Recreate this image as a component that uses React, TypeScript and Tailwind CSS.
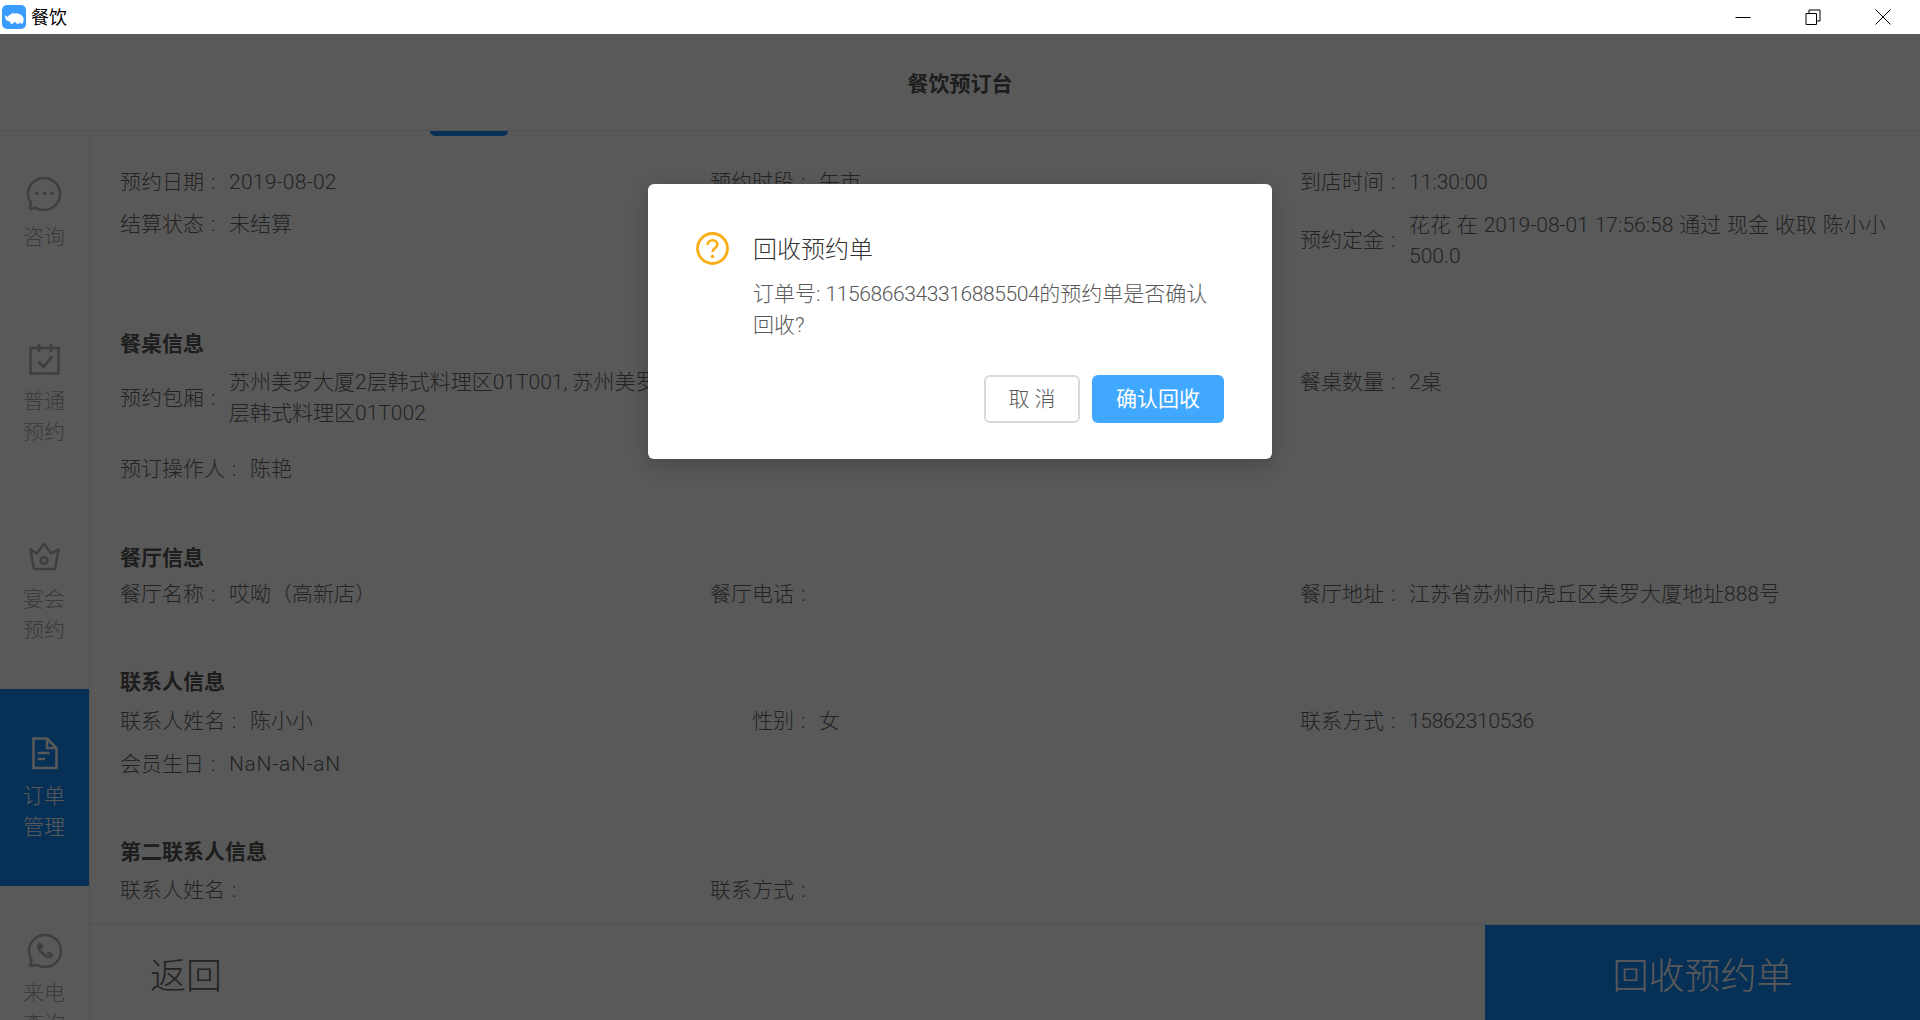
import React from "react";

const C = "#b4b4b4";

const Chat = () => (
  <svg viewBox="6 7 36 36" className="w-[36px] h-[36px]" fill="none" stroke={C} strokeWidth="2.6" strokeLinejoin="round">
    <path d="M24 9A16 16 0 1 1 24 41C21 41 18 40.3 15.5 39L10 40L10.8 33.5C9 31 8 28 8 25A16 16 0 0 1 24 9Z" />
    <circle cx="17" cy="24.500" r="1.8" fill={C} stroke="none" />
    <circle cx="24.500" cy="24.500" r="1.8" fill={C} stroke="none" />
    <circle cx="32" cy="24.500" r="1.8" fill={C} stroke="none" />
  </svg>
);
const Calendar = () => (
  <svg viewBox="6 7 36 36" className="w-[36px] h-[36px]" fill="none" stroke={C} strokeWidth="2.6">
    <path d="M10.500 14H38.500V39.500H10.500Z" />
    <path d="M19 10V18M31 10V18" />
    <path d="M18.500 27.500L23.500 33L32 22.500" strokeWidth="3" />
  </svg>
);
const Crown = () => (
  <svg viewBox="6 7 36 36" className="w-[36px] h-[36px]" fill="none" stroke={C} strokeWidth="2.6" strokeLinejoin="round">
    <path d="M10.500 15.500L17 19.500L24 9.500L31 19.500L38.500 15.500L35 35H14Z" />
    <circle cx="24" cy="26.500" r="3.400" />
  </svg>
);
const Doc = () => (
  <svg viewBox="6 7 36 36" className="w-[36px] h-[36px]" fill="none" stroke="#ffffff" strokeWidth="2.6">
    <path d="M13.500 9.500H27L36.500 19V39H13.500Z" />
    <path d="M27 9.500V19H36.500" />
    <path d="M17.500 24H29.500M17.500 30H25" />
  </svg>
);
const Phone = () => (
  <svg viewBox="6 7 36 36" className="w-[36px] h-[36px]" fill="none" stroke={C} strokeWidth="2.6" strokeLinejoin="round">
    <path d="M25 9A16 16 0 1 1 25 41C22 41 19 40.200 16.500 38.800L10.500 40L11.500 33.800C9.800 31.300 9 28.300 9 25A16 16 0 0 1 25 9Z" />
    <path d="M19.500 18C18.300 19.200 18.200 21 19.200 23.200C20.800 26.500 23.300 28.800 26.500 30.200C28.700 31.100 30.500 30.800 31.800 29.300" strokeWidth="2.8" strokeLinecap="round" />
    <path d="M19 17.500L21.500 17.500L22.800 21L21 23M31.800 29.500L32 27.500L28.500 26L26.500 27.800" fill={C} strokeWidth="1" />
  </svg>
);

const Logo = () => (
  <div className="w-[24px] h-[24px] rounded-[5px] bg-[#3a9cff] flex items-center justify-center">
    <svg viewBox="0 0 24 24" className="w-[24px] h-[24px]" fill="#ffffff">
      <path d="M2.500 10L5.500 12C6.500 10.500 8 9.300 9.500 9L10.500 7.500L11.300 8.800C13 8 16 8.200 18 9.300C20 10.300 21.500 12 21.700 14.500L21 18L19 19L17.800 17L16.800 19L14.500 18.500L13.500 17L11.500 17.500L10.800 19L8.500 18.500L8.200 16.500C6 16.500 4 15.200 3.500 13.500Z" />
    </svg>
  </div>
);

function Item({ label, value, full, className = "" }: { label: string; value?: React.ReactNode; full?: boolean; className?: string }) {
  return (
    <div className={`flex items-center ${className}`}>
      <span className={`whitespace-nowrap shrink-0 text-right ${full ? "min-w-[84px]" : ""}`}>{label}</span>
      <span className="w-[25px] shrink-0 pl-[7px]">:</span>
      {value ? <span className="flex-1 min-w-0">{value}</span> : null}
    </div>
  );
}

const Section = ({ children, className }: { children: React.ReactNode; className: string }) => (
  <div className={`font-bold text-[#555555] ${className}`}>{children}</div>
);

const Row = ({ children, className = "" }: { children: React.ReactNode; className?: string }) => (
  <div className={`grid grid-cols-[590px_590px_590px] ${className}`}>{children}</div>
);

const navItems = [
  { icon: <Chat />, lines: ["咨询"], box: "h-[166px] pt-[45px]", gap: "mt-[10px]" },
  { icon: <Calendar />, lines: ["普通", "预约"], box: "h-[197px] pt-[44px]", gap: "mt-[9px]" },
  { icon: <Crown />, lines: ["宴会", "预约"], box: "h-[195px] pt-[47px]", gap: "mt-[7px]" },
  { icon: <Doc />, lines: ["订单", "管理"], box: "h-[197px] pt-[47px] bg-[#1389f5] text-white", gap: "mt-[9px]" },
  { icon: <Phone />, lines: ["来电", "查询"], box: "h-[197px] pt-[47px]", gap: "mt-[9px]" },
];

export default function App() {
  return (
    <div className="w-[1920px] h-[1020px] overflow-hidden flex flex-col bg-white text-[21px] leading-[31px] font-light font-['Roboto','Noto_Sans_CJK_SC',sans-serif]">
      <div className="h-[34px] shrink-0 flex items-center justify-between bg-white text-black">
        <div className="flex items-center pl-[2px] gap-[5px]">
          <Logo />
          <span className="text-[18px] font-normal">餐饮</span>
        </div>
        <div className="flex items-center pr-[29px] gap-[54px]">
          <svg viewBox="0 0 16 16" className="w-[16px] h-[16px]" fill="none" stroke="#000" strokeWidth="1">
            <path d="M0.500 8.500H15.500" />
          </svg>
          <svg viewBox="0 0 16 16" className="w-[16px] h-[16px]" fill="none" stroke="#000" strokeWidth="1">
            <path d="M1 4.500H11.500V15.500H1Z" />
            <path d="M4 4.500V1H15V12H11.500" />
          </svg>
          <svg viewBox="0 0 16 16" className="w-[16px] h-[16px]" fill="none" stroke="#000" strokeWidth="1">
            <path d="M0.500 0.500L15.500 15.500M15.500 0.500L0.500 15.500" />
          </svg>
        </div>
      </div>

      <div className="relative flex-1 min-h-0 flex flex-col">
        <header className="h-[97px] shrink-0 flex items-center justify-center pt-[4px] border-b border-[#e8e8e8] font-bold text-[#555555]">
          餐饮预订台
        </header>
        <div className="flex-1 min-h-0 flex">
          <nav className="w-[90px] shrink-0 border-r border-[#e8e8e8] text-[#a8a8a8] overflow-hidden">
            {navItems.map((n) => (
              <div key={n.lines[0]} className={`flex flex-col items-center pr-[1px] ${n.box}`}>
                {n.icon}
                <div className={`text-center leading-[31px] ${n.gap}`}>
                  {n.lines.map((l) => (
                    <div key={l}>{l}</div>
                  ))}
                </div>
              </div>
            ))}
          </nav>
          <div className="flex-1 min-w-0 flex flex-col">
            <div className="relative flex-1 min-h-0 overflow-hidden pl-[30px] pt-[36px] text-[#666666]">
              <div className="absolute left-[340px] top-0 w-[78px] h-[5px] rounded-b-[5px] bg-[#1389f5]" />
              <Row>
                <Item label="预约日期" value={<span className="tracking-[0.25px]">2019-08-02</span>} />
                <Item label="预约时段" value="午市" />
                <Item label="到店时间" value="11:30:00" />
              </Row>
              <Row className="mt-[11px]">
                <Item label="结算状态" value="未结算" className="self-start" />
                <div />
                <Item label="预约定金" value={<span className="block pt-[1px] [word-spacing:0.7px]">花花 在 2019-08-01 17:56:58 通过 现金 收取 陈小小 500.0</span>} />
              </Row>
              <Section className="mt-[57px]">餐桌信息</Section>
              <Row className="mt-[7px]">
                <Item
                  label="预约包厢"
                  value={
                    <span className="whitespace-nowrap">
                      苏州美罗大厦2层韩式料理区01T001, 苏州美罗大厦2
                      <br />
                      层韩式料理区01T002
                    </span>
                  }
                />
                <div />
                <Item label="餐桌数量" value="2桌" className="self-start" />
              </Row>
              <Row className="mt-[25px]">
                <Item label="预订操作人" value="陈艳" />
              </Row>
              <Section className="mt-[58px]">餐厅信息</Section>
              <Row className="mt-[5px]">
                <Item label="餐厅名称" value="哎呦（高新店）" />
                <Item label="餐厅电话" />
                <Item label="餐厅地址" value="江苏省苏州市虎丘区美罗大厦地址888号" />
              </Row>
              <Section className="mt-[57px]">联系人信息</Section>
              <Row className="mt-[8px]">
                <Item label="联系人姓名" value="陈小小" />
                <Item label="性别" value="女" full />
                <Item label="联系方式" value={<span className="tracking-[-0.3px]">15862310536</span>} />
              </Row>
              <Row className="mt-[12px]">
                <Item label="会员生日" value={<span className="tracking-[0.7px]">NaN-aN-aN</span>} />
              </Row>
              <Section className="mt-[57px]">第二联系人信息</Section>
              <Row className="mt-[7px]">
                <Item label="联系人姓名" />
                <Item label="联系方式" />
              </Row>
            </div>
            <div className="h-[96px] shrink-0 border-t border-[#e8e8e8] flex items-stretch justify-between text-[36px]">
              <div className="pl-[60px] pt-[10px] flex items-center text-[#666666]">返回</div>
              <div className="w-[435px] pt-[10px] bg-[#1389f5] text-white flex items-center justify-center">回收预约单</div>
            </div>
          </div>
        </div>

        <div className="absolute inset-0 bg-black/65 flex justify-center pt-[150px]">
          <div className="w-[624px] h-[275px] rounded-[6px] bg-white shadow-[0_6px_20px_rgba(0,0,0,0.2)] pt-[48px] pl-[48px] pr-[48px] flex flex-col">
            <div className="flex">
              <svg viewBox="0 0 33 33" className="w-[33px] h-[33px] shrink-0" fill="none" stroke="#faad14" strokeWidth="2.800">
                <circle cx="16.500" cy="16.500" r="15" />
                <path d="M11.500 13C11.500 10.200 13.700 8.300 16.500 8.300C19.300 8.300 21.400 10.200 21.400 12.800C21.400 16 16.500 16.200 16.500 20" strokeWidth="2.600" />
                <circle cx="16.500" cy="24.500" r="1.800" fill="#faad14" stroke="none" />
              </svg>
              <div className="ml-[24px] flex-1 min-w-0">
                <div className="text-[24px] leading-[36px] text-[#333333]">回收预约单</div>
                <div className="mt-[11px] text-[#595959]">
                  订单号: <span className="tracking-[-0.4px]">1156866343316885504</span>的预约单是否确认回收?
                </div>
              </div>
            </div>
            <div className="mt-auto mb-[36px] flex justify-end gap-[12px]">
              <button className="w-[96px] h-[48px] pt-[1px] rounded-[6px] border-2 border-[#d9d9d9] bg-white text-[#595959] text-[21px]">取 消</button>
              <button className="w-[132px] h-[48px] pt-[1px] rounded-[6px] bg-[#40a9ff] text-white text-[21px] font-normal">确认回收</button>
            </div>
          </div>
        </div>
      </div>
    </div>
  );
}
